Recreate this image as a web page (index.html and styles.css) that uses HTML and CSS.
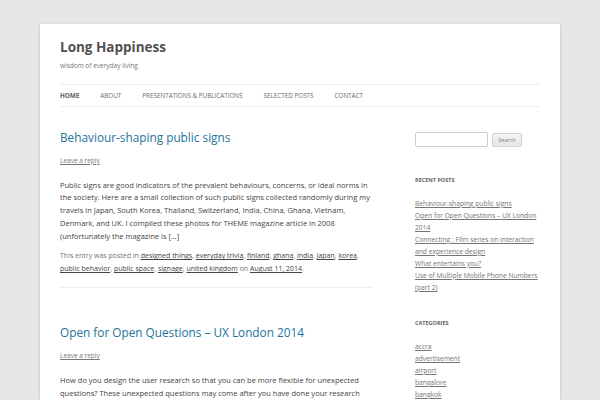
FILE: index.html
```html
<!DOCTYPE html>
<html lang="en">
<head>
    <meta charset="UTF-8">
    <meta name="viewport" content="width=device-width, initial-scale=1.0">
    <title>Long Happiness | wisdom of everyday living</title>
    <link rel="stylesheet" href="styles.css">
</head>
<body>
    <div class="site">
        <header class="site-header">
            <h1 class="site-title"><a href="#">Long Happiness</a></h1>
            <h2 class="site-description">wisdom of everyday living</h2>
            <nav class="main-navigation">
                <ul class="nav-menu">
                    <li class="current"><a href="#">Home</a></li>
                    <li><a href="#">About</a></li>
                    <li><a href="#">Presentations &amp; Publications</a></li>
                    <li><a href="#">Selected Posts</a></li>
                    <li><a href="#">Contact</a></li>
                </ul>
            </nav>
        </header>

        <div class="main">
            <div class="content">
                <article class="post">
                    <header class="entry-header">
                        <h1 class="entry-title"><a href="#">Behaviour-shaping public signs</a></h1>
                        <div class="comments-link"><a href="#">Leave a reply</a></div>
                    </header>
                    <div class="entry-content">
                        <p>Public signs are good indicators of the prevalent behaviours, concerns, or ideal norms in the society. Here are a small collection of such public signs collected randomly during my travels in Japan, South Korea, Thailand, Switzerland, India, China, Ghana, Vietnam, Denmark, and UK. I compiled these photos for THEME magazine article in 2008 (unfortunately the magazine is [&hellip;]</p>
                    </div>
                    <footer class="entry-meta">
                        This entry was posted in <a href="#">designed things</a>, <a href="#">everyday trivia</a>, <a href="#">finland</a>, <a href="#">ghana</a>, <a href="#">india</a>, <a href="#">japan</a>, <a href="#">korea</a>, <a href="#">public behavior</a>, <a href="#">public space</a>, <a href="#">signage</a>, <a href="#">united kingdom</a> on <a href="#">August 11, 2014</a>.
                    </footer>
                </article>

                <article class="post">
                    <header class="entry-header">
                        <h1 class="entry-title"><a href="#">Open for Open Questions &ndash; UX London 2014</a></h1>
                        <div class="comments-link"><a href="#">Leave a reply</a></div>
                    </header>
                    <div class="entry-content">
                        <p>How do you design the user research so that you can be more flexible for unexpected questions? These unexpected questions may come after you have done your research and started analysing the data.</p>
                    </div>
                </article>
            </div>

            <aside class="sidebar">
                <form class="search-form">
                    <input type="text" class="search-field">
                    <button type="button" class="search-submit">Search</button>
                </form>

                <section class="widget">
                    <h3 class="widget-title">Recent Posts</h3>
                    <ul>
                        <li><a href="#">Behaviour-shaping public signs</a></li>
                        <li><a href="#">Open for Open Questions &ndash; UX London 2014</a></li>
                        <li><a href="#">Connecting : Film series on interaction and experience design</a></li>
                        <li><a href="#">What entertains you?</a></li>
                        <li><a href="#">Use of Multiple Mobile Phone Numbers (part 2)</a></li>
                    </ul>
                </section>

                <section class="widget">
                    <h3 class="widget-title">Categories</h3>
                    <ul>
                        <li><a href="#">accra</a></li>
                        <li><a href="#">advertisement</a></li>
                        <li><a href="#">airport</a></li>
                        <li><a href="#">bangalore</a></li>
                        <li><a href="#">bangkok</a></li>
                    </ul>
                </section>
            </aside>
        </div>
    </div>
</body>
</html>
```

FILE: styles.css
```css
* {
    margin: 0;
    padding: 0;
    box-sizing: border-box;
}

body {
    background: #e6e6e6;
    font-family: "Open Sans", "Liberation Sans", sans-serif;
    color: #444;
    overflow: hidden;
}

a {
    color: inherit;
}

ul {
    list-style: none;
}

.site {
    width: 520px;
    margin: 24px auto 0;
    padding: 0 20px;
    background: #fff;
    box-shadow: rgba(100, 100, 100, .3) 0 1px 3px;
    height: 376px;
    overflow: hidden;
}

/* header */

.site-header {
    padding-top: 12px;
}

.site-title {
    font-size: 13.5px;
    line-height: 23px;
    font-weight: bold;
    color: #515151;
}
.site-title a {
    text-decoration: none;
}

.site-description {
    font-size: 6.5px;
    line-height: 11px;
    font-weight: normal;
    color: #757575;
    margin-top: 1px;
}

.main-navigation {
    margin-top: 13px;
    border-top: 1px solid #ededed;
    border-bottom: 1px solid #ededed;
}

.nav-menu {
    display: flex;
    height: 21px;
    align-items: center;
}
.nav-menu li {
    margin-right: 21px;
    font-size: 6.3px;
    text-transform: uppercase;
}
.nav-menu a {
    color: #6a6a6a;
    text-decoration: none;
}
.nav-menu .current a {
    color: #636363;
    font-weight: bold;
}

/* layout */

.main {
    display: flex;
    justify-content: space-between;
    padding-top: 23px;
}

.content {
    width: 312px;
}

.sidebar {
    width: 125px;
}

/* posts */

.post {
    padding-bottom: 12px;
    border-bottom: 1px solid #ededed;
    margin-bottom: 37px;
}

.entry-title {
    font-size: 11.8px;
    line-height: 14px;
    font-weight: normal;
}
.entry-title a {
    color: #21759b;
    text-decoration: none;
}

.comments-link {
    margin-top: 11px;
    font-size: 6.5px;
    line-height: 12px;
    color: #777;
}

.entry-content {
    margin-top: 11.5px;
    font-size: 7.5px;
    line-height: 12.75px;
}

.entry-meta {
    margin-top: 7px;
    font-size: 7px;
    line-height: 13px;
    color: #757575;
}
.entry-meta a {
    color: #444;
}

/* sidebar */

.search-form {
    display: flex;
    align-items: center;
    margin-top: 2px;
}

.search-field {
    width: 73px;
    height: 15px;
    border: 1px solid #ccc;
    border-radius: 2px;
    margin-right: 4px;
}

.search-submit {
    width: 30px;
    height: 14px;
    font-family: inherit;
    font-size: 5.5px;
    color: #7c7c7c;
    border: 1px solid #d2d2d2;
    border-radius: 2px;
    background: linear-gradient(#f4f4f4, #e6e6e6);
}

.widget {
    margin-top: 27px;
}
.widget + .widget {
    margin-top: 23px;
}

.widget-title {
    font-size: 5.5px;
    line-height: 12px;
    font-weight: bold;
    text-transform: uppercase;
    color: #636363;
    margin-bottom: 12px;
}

.widget li {
    font-size: 6.7px;
    line-height: 12px;
    color: #757575;
}
```
